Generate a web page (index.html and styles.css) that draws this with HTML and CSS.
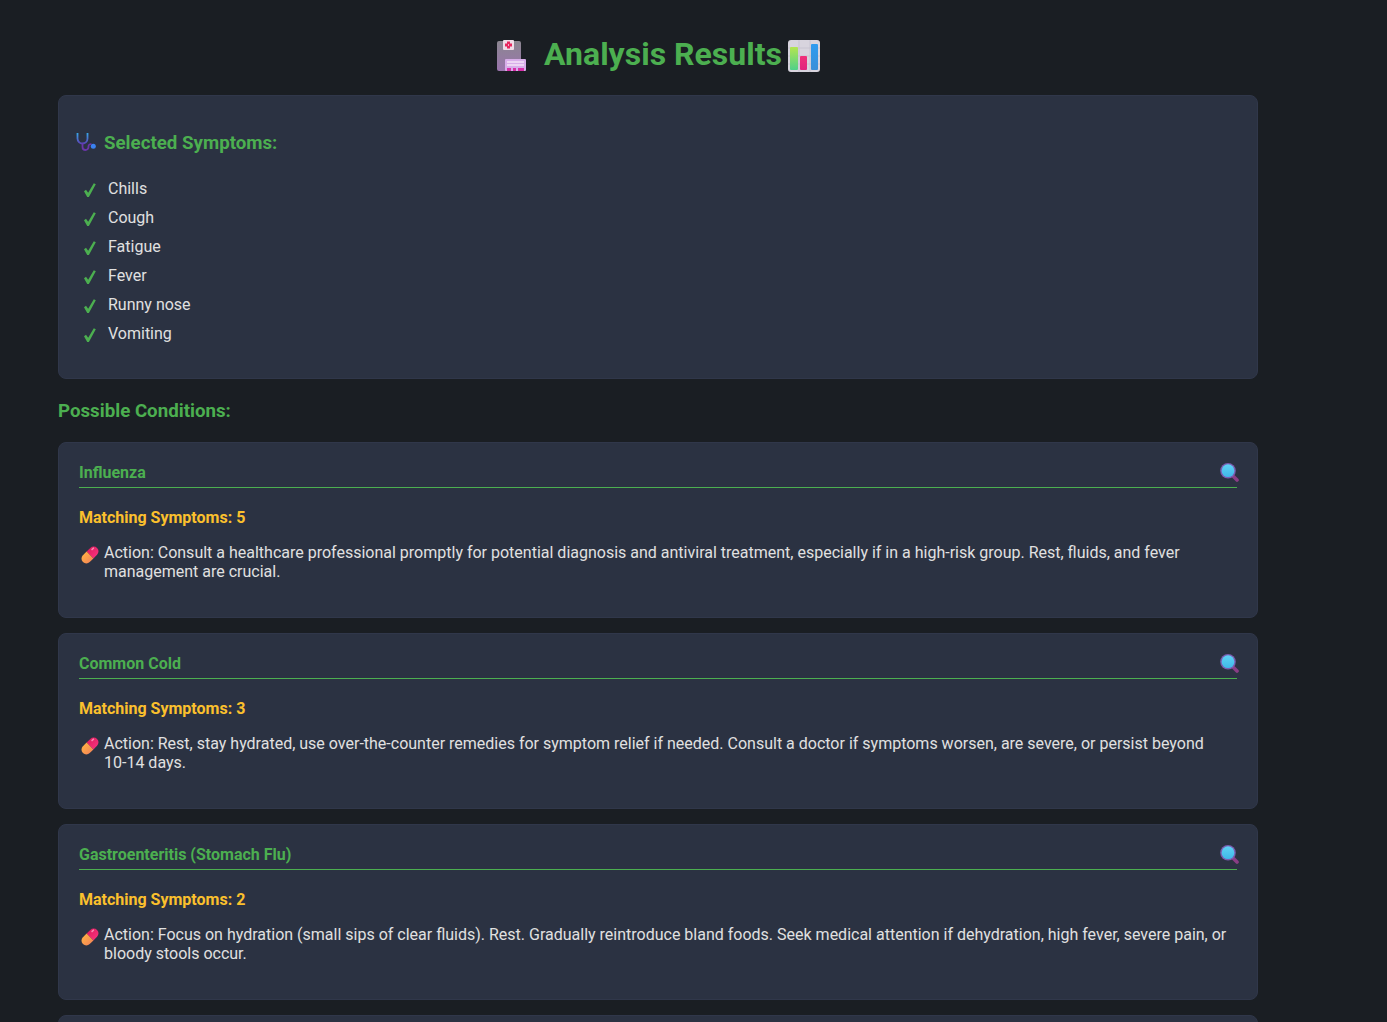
FILE: index.html
```html
<!doctype html>
<html>
<head>
	<title>Analysis Results</title>
	<meta charset="utf-8">
	<link rel="stylesheet" href="styles.css">
</head>
<body>
	<svg class="defs" width="0" height="0">
		<defs>
			<linearGradient id="pillTop" x1="0" y1="0" x2="1" y2="0"><stop offset="0" stop-color="#e21f62"/><stop offset="1" stop-color="#f5307a"/></linearGradient>
			<linearGradient id="pillBottom" x1="0" y1="0" x2="1" y2="0"><stop offset="0" stop-color="#ffac45"/><stop offset="1" stop-color="#f58a55"/></linearGradient>
			<linearGradient id="lensGlass" x1="0" y1="0" x2="0" y2="1"><stop offset="0" stop-color="#5fd2f5"/><stop offset="1" stop-color="#3fb8e8"/></linearGradient>
			<linearGradient id="hospitalBody" x1="0" y1="0" x2="0" y2="1"><stop offset="0" stop-color="#8b8790"/><stop offset="1" stop-color="#9a74ad"/></linearGradient>
			<linearGradient id="barGreen" x1="0" y1="0" x2="0" y2="1"><stop offset="0" stop-color="#b4e550"/><stop offset="1" stop-color="#4fd08a"/></linearGradient>
			<linearGradient id="barPink" x1="0" y1="0" x2="0" y2="1"><stop offset="0" stop-color="#f0307a"/><stop offset="1" stop-color="#e0247e"/></linearGradient>
			<linearGradient id="barBlue" x1="0" y1="0" x2="0" y2="1"><stop offset="0" stop-color="#2f9cf0"/><stop offset="1" stop-color="#3a8fd8"/></linearGradient>
			<linearGradient id="scopeTube" x1="0" y1="0" x2="0" y2="1"><stop offset="0" stop-color="#35a8e8"/><stop offset="1" stop-color="#5a45b8"/></linearGradient>
			<symbol id="pill" viewBox="0 0 20 20">
				<g transform="rotate(45 10 10)">
					<path d="M5.200 10V4.800a4.800 4.800 0 0 1 9.600 0V10z" fill="url(#pillTop)"/>
					<path d="M5.200 10h9.600v5.200a4.800 4.800 0 0 1-9.600 0z" fill="url(#pillBottom)"/>
					<rect x="6.800" y="2" width="1.600" height="3.500" rx=".8" fill="#f88cb5"/>
				</g>
			</symbol>
			<symbol id="lens" viewBox="0 0 20 20">
				<path d="M14 14l4 4" stroke="#8a3d85" stroke-width="3.600" stroke-linecap="round"/>
				<circle cx="9" cy="8.700" r="7.800" fill="#7a5cb0"/>
				<circle cx="9" cy="8.700" r="6.400" fill="url(#lensGlass)"/>
			</symbol>
			<symbol id="check" viewBox="0 0 14 16">
				<path d="M1 9.200L3 7.800 5.200 10.800 10.800 1.200 12.800 2.200 5.900 15H4.200z" fill="#4caf50"/>
			</symbol>
		</defs>
	</svg>

	<main class="results">
		<h1 class="page-title">
			<svg class="title-icon hospital" viewBox="0 0 30 32">
				<rect y="1" width="24" height="30" rx="2" fill="url(#hospitalBody)"/>
				<rect x="6" width="11" height="10" rx="1" fill="#efdde8"/>
				<path d="M10 1.500h3v2h2v3h-2v2h-3v-2H8v-3h2z" fill="#e8265e"/>
				<path d="M11 4.200h1v1.600h-1z" fill="#efdde8"/>
				<rect x="8" y="19" width="21" height="12" rx="1" fill="#d8aeea"/>
				<path d="M10 22h17M10 25h17" stroke="#f3e3f7" stroke-width="1.300"/>
				<path d="M10 31v-3h4v3zM16 31v-3h3v3zM21 31v-3h6v3z" fill="#d62fa8"/>
			</svg>
			<span class="title-text">Analysis Results</span>
			<svg class="title-icon chart" viewBox="0 0 34 32">
				<rect x="1" width="32" height="32" rx="3" fill="#d8d4de"/>
				<path d="M12 0v32M23 0v32M1 8h32M1 16h32M1 24h32" stroke="#c5c0ce" stroke-width=".8"/>
				<rect x="3" y="7" width="8" height="23" rx="1" fill="url(#barGreen)"/>
				<rect x="13" y="16" width="7" height="14" rx="1" fill="url(#barPink)"/>
				<rect x="24" y="4" width="7" height="26" rx="1" fill="url(#barBlue)"/>
			</svg>
		</h1>

		<section class="card symptoms">
			<h2 class="symptoms-title">
				<svg class="scope" viewBox="0 0 21 20">
					<path d="M1.500 1v5.500a5 5 0 0 0 10 0V1" fill="none" stroke="url(#scopeTube)" stroke-width="1.800"/>
					<path d="M6.500 11.500V15a3 3 0 0 0 6 0v-1a2 2 0 0 1 3-1.500" fill="none" stroke="#6a35a8" stroke-width="1.800"/>
					<circle cx="17.300" cy="14.300" r="2.500" fill="#3a82f0"/>
				</svg>
				Selected Symptoms:
			</h2>
			<ul class="symptom-list">
				<li><svg class="check"><use href="#check"/></svg>Chills</li>
				<li><svg class="check"><use href="#check"/></svg>Cough</li>
				<li><svg class="check"><use href="#check"/></svg>Fatigue</li>
				<li><svg class="check"><use href="#check"/></svg>Fever</li>
				<li><svg class="check"><use href="#check"/></svg>Runny nose</li>
				<li><svg class="check"><use href="#check"/></svg>Vomiting</li>
			</ul>
		</section>

		<h2 class="conditions-title">Possible Conditions:</h2>

		<article class="card condition">
			<header class="condition-head">
				<h3>Influenza</h3>
				<svg class="lens"><use href="#lens"/></svg>
			</header>
			<p class="matching">Matching Symptoms: 5</p>
			<p class="action"><svg class="pill"><use href="#pill"/></svg><span>Action: Consult a healthcare professional promptly for potential diagnosis and antiviral treatment, especially if in a high-risk group. Rest, fluids, and fever management are crucial.</span></p>
		</article>

		<article class="card condition">
			<header class="condition-head">
				<h3>Common Cold</h3>
				<svg class="lens"><use href="#lens"/></svg>
			</header>
			<p class="matching">Matching Symptoms: 3</p>
			<p class="action"><svg class="pill"><use href="#pill"/></svg><span>Action: Rest, stay hydrated, use over-the-counter remedies for symptom relief if needed. Consult a doctor if symptoms worsen, are severe, or persist beyond 10-14 days.</span></p>
		</article>

		<article class="card condition">
			<header class="condition-head">
				<h3>Gastroenteritis (Stomach Flu)</h3>
				<svg class="lens"><use href="#lens"/></svg>
			</header>
			<p class="matching">Matching Symptoms: 2</p>
			<p class="action"><svg class="pill"><use href="#pill"/></svg><span>Action: Focus on hydration (small sips of clear fluids). Rest. Gradually reintroduce bland foods. Seek medical attention if dehydration, high fever, severe pain, or bloody stools occur.</span></p>
		</article>

		<article class="card condition"></article>
	</main>
</body>
</html>
```

FILE: styles.css
```css
html, body {
	height: 1022px;
	overflow: hidden;
}

body {
	margin: 0;
	background: #1a1e23;
	color: #e0e0e0;
	font: 16px/19px Roboto, sans-serif;
}

.defs {
	display: block;
}

.results {
	width: 1200px;
	margin-left: 58px;
	padding-top: 38px;
}

.page-title {
	display: flex;
	justify-content: center;
	align-items: center;
	gap: 5px;
	height: 34px;
	margin: 0 0 23px;
	padding-left: 2px;
	color: #4caf50;
	font-size: 32px;
	line-height: 34px;
	font-weight: 700;
}

.title-text {
	margin-top: -2px;
}

.title-icon {
	flex: none;
	margin-top: 2px;
}

.hospital {
	width: 30px;
	height: 32px;
	margin-right: 12px;
}

.chart {
	width: 34px;
	height: 32px;
}

.card {
	background: #2b3242;
	border: 1px solid #30374a;
	border-radius: 8px;
	box-sizing: border-box;
}

.symptoms {
	height: 284px;
	padding: 36px 17px 0;
}

.symptoms-title {
	display: flex;
	align-items: center;
	gap: 7px;
	margin: 0 0 20px;
	color: #4caf50;
	font-size: 18.72px;
	line-height: 22px;
	font-weight: 700;
}

.scope {
	width: 21px;
	height: 20px;
	margin-top: -2px;
}

.symptom-list {
	margin: 0;
	padding: 0;
	list-style: none;
}

.symptom-list li {
	display: flex;
	align-items: center;
	height: 29px;
	padding-left: 7px;
}

.check {
	flex: none;
	width: 14px;
	height: 16px;
	margin: 2px 11px 0 0;
}

.conditions-title {
	margin: 21px 0 20px;
	color: #4caf50;
	font-size: 18.72px;
	line-height: 22px;
	font-weight: 700;
}

.condition {
	height: 176px;
	margin-bottom: 15px;
	padding: 20px;
}

.condition-head {
	display: flex;
	justify-content: space-between;
	align-items: flex-start;
	padding-bottom: 5px;
	border-bottom: 1px solid #4caf50;
}

.condition-head h3 {
	margin: 0;
	color: #4caf50;
	font-size: 16px;
	line-height: 19px;
	font-weight: 700;
}

.lens {
	flex: none;
	width: 20px;
	height: 20px;
	margin: -1px -2px 0 0;
}

.matching {
	margin: 20px 0 16px;
	color: #fbc02d;
	font-weight: 700;
}

.action {
	display: flex;
	margin: 0;
	padding-right: 8px;
}

.pill {
	flex: none;
	width: 20px;
	height: 20px;
	margin: 2px 4px 0 1px;
}
```
